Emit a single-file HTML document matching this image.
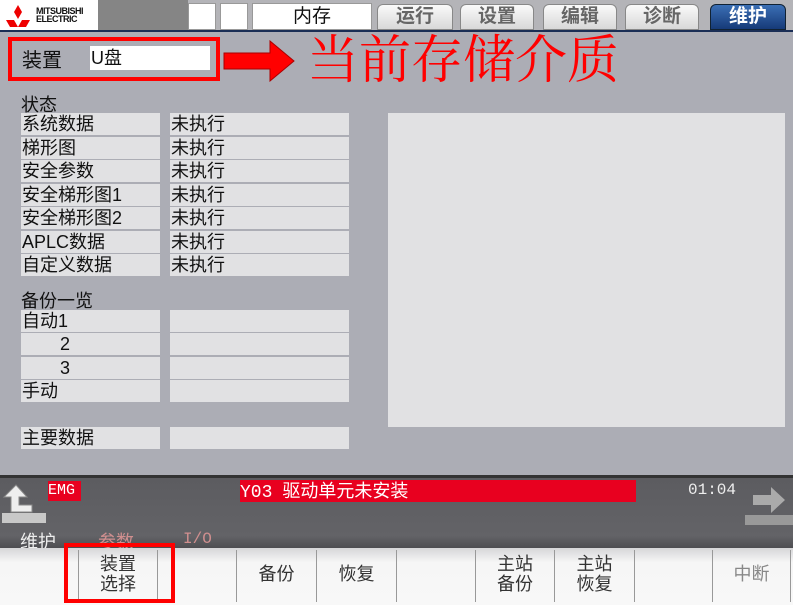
<!DOCTYPE html>
<html><head><meta charset="utf-8"><style>
*{margin:0;padding:0;box-sizing:border-box}
body{width:793px;height:605px;overflow:hidden;background:#acadb5;font-family:"Liberation Sans","Noto Sans CJK SC",sans-serif;position:relative;color:#111}
.a{position:absolute}
.c{position:absolute;background:#e1e1e3;height:22px;font-size:18px;line-height:22px;padding-left:1px;white-space:nowrap}
.tab{position:absolute;top:4px;height:26px;border-radius:6px 6px 0 0;background:linear-gradient(#fafafa,#d8d8d8);border:1px solid #888;font-size:19px;line-height:24px;text-align:center;color:#666;font-weight:bold}
.fk{position:absolute;top:550px;height:52px;border-left:1px solid #999;font-size:18px;line-height:20px;text-align:center;color:#333;padding-top:4px}
</style></head><body>
<div class="a" style="left:0;top:0;width:793px;height:31px;background:#b4b4b8"></div>
<div class="a" style="left:0;top:0;width:98px;height:30px;background:#fff"></div>
<div class="a" style="left:98px;top:0;width:90px;height:30px;background:#858585"></div>
<svg class="a" style="left:3px;top:4px" width="30" height="24" viewBox="0 0 30 24"><polygon points="15,1 19,8 15,15 11,8" fill="#e00"/><polygon points="11,16 15,23 7,23 3,16" fill="#e00"/><polygon points="19,16 27,16 23,23 15,23" fill="#e00"/></svg>
<div class="a" style="left:36px;top:7px;font-size:9px;line-height:8px;font-weight:bold;letter-spacing:-0.5px">MITSUBISHI<br>ELECTRIC</div>
<div class="a" style="left:188px;top:3px;width:28px;height:27px;background:#fff;border:1px solid #999"></div>
<div class="a" style="left:220px;top:3px;width:28px;height:27px;background:#fff;border:1px solid #999"></div>
<div class="a" style="left:252px;top:3px;width:120px;height:27px;background:#fff;border:1px solid #999;font-size:19px;line-height:25px;text-align:center">内存</div>
<div class="tab" style="left:377px;width:76px">运行</div>
<div class="tab" style="left:460px;width:74px">设置</div>
<div class="tab" style="left:543px;width:74px">编辑</div>
<div class="tab" style="left:625px;width:74px">诊断</div>
<div class="tab" style="left:710px;width:76px;background:linear-gradient(#3b6fb5,#163a78);color:#fff;border-color:#123">维护</div>
<div class="a" style="left:0;top:30px;width:793px;height:2px;background:#1a2e55"></div>
<div class="a" style="left:8px;top:37px;width:212px;height:44px;border:4px solid #f00"></div>
<div class="a" style="left:22px;top:44px;font-size:20px">装置</div>
<div class="a" style="left:90px;top:46px;width:120px;height:24px;background:#fff;font-size:18px;line-height:24px;padding-left:1px">U盘</div>
<svg class="a" style="left:222px;top:40px" width="75" height="42"><polygon points="2,13 48,13 48,1 72,21 48,41 48,29 2,29" fill="#f00" stroke="#a00" stroke-width="1"/></svg>
<div class="a" style="left:307px;top:30px;font-size:52px;color:#f00;font-family:'Liberation Serif','Noto Serif CJK SC',serif;line-height:64px;white-space:nowrap">当前存储介质</div>
<div class="a" style="left:21px;top:91px;font-size:18px">状态</div>
<div class="c" style="left:21px;top:113px;width:139px">系统数据</div><div class="c" style="left:170px;top:113px;width:179px">未执行</div>
<div class="c" style="left:21px;top:137px;width:139px">梯形图</div><div class="c" style="left:170px;top:137px;width:179px">未执行</div>
<div class="c" style="left:21px;top:160px;width:139px">安全参数</div><div class="c" style="left:170px;top:160px;width:179px">未执行</div>
<div class="c" style="left:21px;top:184px;width:139px">安全梯形图1</div><div class="c" style="left:170px;top:184px;width:179px">未执行</div>
<div class="c" style="left:21px;top:207px;width:139px">安全梯形图2</div><div class="c" style="left:170px;top:207px;width:179px">未执行</div>
<div class="c" style="left:21px;top:231px;width:139px">APLC数据</div><div class="c" style="left:170px;top:231px;width:179px">未执行</div>
<div class="c" style="left:21px;top:254px;width:139px">自定义数据</div><div class="c" style="left:170px;top:254px;width:179px">未执行</div>
<div class="a" style="left:21px;top:287px;font-size:18px">备份一览</div>
<div class="c" style="left:21px;top:310px;width:139px">自动1</div><div class="c" style="left:170px;top:310px;width:179px"></div>
<div class="c" style="left:21px;top:333px;width:139px;padding-left:39px">2</div><div class="c" style="left:170px;top:333px;width:179px"></div>
<div class="c" style="left:21px;top:357px;width:139px;padding-left:39px">3</div><div class="c" style="left:170px;top:357px;width:179px"></div>
<div class="c" style="left:21px;top:380px;width:139px">手动</div><div class="c" style="left:170px;top:380px;width:179px"></div>
<div class="c" style="left:21px;top:427px;width:139px">主要数据</div><div class="c" style="left:170px;top:427px;width:179px"></div>
<div class="a" style="left:388px;top:113px;width:397px;height:314px;background:#e1e1e3"></div>
<div class="a" style="left:0;top:475px;width:793px;height:3px;background:#333"></div>
<div class="a" style="left:0;top:478px;width:793px;height:72px;background:linear-gradient(#5c5c60 0%,#636367 80%,#4a4a4e 100%)"></div>
<div class="a" style="left:48px;top:481px;width:33px;height:20px;background:#e8001f;color:#fff;font-family:'Liberation Mono',monospace;font-size:15px;line-height:20px">EMG</div>
<div class="a" style="left:240px;top:480px;width:396px;height:22px;background:#e8001f;color:#fff;font-size:18px;line-height:22px"><span style="font-family:'Liberation Mono',monospace">Y03</span>&nbsp;&nbsp;驱动单元未安装</div>
<div class="a" style="left:688px;top:481px;color:#eee;font-family:'Liberation Mono',monospace;font-size:16px">01:04</div>
<svg class="a" style="left:2px;top:481px" width="45" height="45"><path d="M14 4 L2 16 L9 16 L9 31 L30 31 L30 24 L17 24 L17 16 L25 16 Z" fill="#eee" stroke="#888"/><rect x="0" y="32" width="44" height="10" fill="#c8c8c8"/></svg>
<svg class="a" style="left:745px;top:483px" width="48" height="45"><path d="M8 12 L26 12 L26 4 L40 17 L26 30 L26 22 L8 22 Z" fill="#aaa"/><rect x="0" y="32" width="48" height="10" fill="#999"/></svg>
<div class="a" style="left:20px;top:528px;color:#eee;font-size:18px">维护</div>
<div class="a" style="left:98px;top:528px;color:#d08f8f;font-size:18px">参数</div>
<div class="a" style="left:183px;top:530px;color:#d08f8f;font-family:'Liberation Mono',monospace;font-size:16px">I/O</div>
<div class="a" style="left:0;top:548px;width:793px;height:57px;background:linear-gradient(#d6d6d8,#f6f6f6 25%,#f8f8f8)"></div>
<div class="fk" style="left:0;width:78px;border-left:none"></div>
<div class="fk" style="left:78px;width:79px">装置<br>选择</div>
<div class="fk" style="left:157px;width:79px"></div>
<div class="fk" style="left:236px;width:80px;padding-top:14px">备份</div>
<div class="fk" style="left:316px;width:80px;padding-top:14px">恢复</div>
<div class="fk" style="left:396px;width:79px"></div>
<div class="fk" style="left:475px;width:79px">主站<br>备份</div>
<div class="fk" style="left:554px;width:80px">主站<br>恢复</div>
<div class="fk" style="left:634px;width:78px"></div>
<div class="fk" style="left:712px;width:79px;padding-top:14px;color:#888;border-right:1px solid #999">中断</div>
<div class="a" style="left:64px;top:543px;width:111px;height:60px;border:4px solid #f00"></div>
</body></html>
